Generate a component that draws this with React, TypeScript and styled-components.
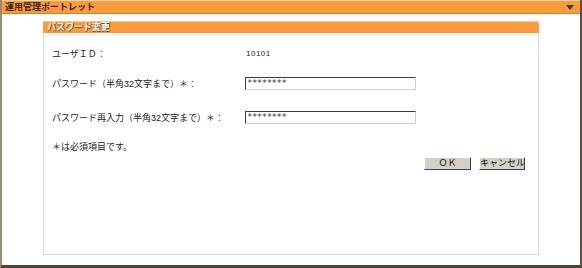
import React from 'react';
import styled, { createGlobalStyle } from 'styled-components';

const GlobalStyle = createGlobalStyle`
  html, body {
    margin: 0;
    padding: 0;
    background: #ffffff;
  }
  body {
    font-family: "Liberation Sans", "Noto Sans CJK JP", sans-serif;
  }
`;

const orange = '#ff9a3c';

const Portlet = styled.div`
  width: 582px;
  height: 268px;
  box-sizing: border-box;
  display: flex;
  flex-direction: column;
  background: #ffffff;
  border-left: 2px solid #9a8a70;
  border-right: 2px solid #5a5040;
  border-bottom: 3px solid #4e4538;
`;

const PortletHeader = styled.div`
  height: 12px;
  display: flex;
  align-items: center;
  justify-content: space-between;
  background: ${orange};
  border-top: 1px solid #ffd8a8;
  border-bottom: 1px solid #e07f22;
  padding: 0 4px 0 3px;

  .title {
    font-size: 9px;
    font-weight: bold;
    color: #3a2410;
    line-height: 12px;
  }
`;

const MenuArrow = styled.span`
  width: 0;
  height: 0;
  border-left: 4px solid transparent;
  border-right: 4px solid transparent;
  border-top: 5px solid #3c3c3c;
  margin-right: 2px;
`;

const PortletBody = styled.div`
  flex: 1;
  padding: 7px 41px 10px 41px;
  display: flex;
`;

const Panel = styled.div`
  flex: 1;
  display: flex;
  flex-direction: column;
  border: 1px solid #dadada;
  border-top: none;
`;

const PanelHeader = styled.div`
  height: 11px;
  margin: 0 -1px;
  background: ${orange};
  border-top: 1px solid #ffc890;
  border-top-right-radius: 3px;
  padding-left: 4px;
  font-size: 9px;
  font-weight: bold;
  line-height: 11px;
  color: #ffffff;
  text-shadow: 1px 0 0 #7a4a18, 0 1px 0 #7a4a18;
`;

const Form = styled.div`
  display: flex;
  flex-direction: column;
  padding: 0 13px 0 8px;
`;

const Row = styled.div<{ $top: number }>`
  display: grid;
  grid-template-columns: 193px 171px;
  align-items: center;
  height: 14px;
  margin-top: ${(p) => p.$top}px;
  font-size: 9px;
  color: #222222;
`;

const Value = styled.span`
  padding-left: 1px;
  font-size: 8px;
  letter-spacing: 0.5px;
`;

const MaskedBox = styled.input`
  box-sizing: border-box;
  width: 171px;
  height: 13px;
  padding: 0 1px;
  margin: 0;
  font-size: 9px;
  letter-spacing: -0.5px;
  font-family: "DejaVu Sans Mono", monospace;
  color: #333333;
  background: #ffffff;
  border-top: 1px solid #3a3a3a;
  border-left: 1px solid #3a3a3a;
  border-right: 1px solid #d4d0c8;
  border-bottom: 1px solid #d4d0c8;
  outline: none;
`;

const Note = styled.div`
  margin-top: 16px;
  height: 14px;
  line-height: 14px;
  font-size: 9px;
  color: #222222;
`;

const Buttons = styled.div`
  display: flex;
  justify-content: flex-end;
  gap: 8px;
  margin-top: 3px;
`;

const Button = styled.button<{ $width: number }>`
  box-sizing: border-box;
  width: ${(p) => p.$width}px;
  height: 13px;
  padding: 0;
  margin: 0;
  white-space: nowrap;
  overflow: hidden;
  font-size: 9px;
  font-family: "Liberation Sans", "Noto Sans CJK JP", sans-serif;
  line-height: 11px;
  color: #111111;
  background: #d4d0c8;
  border-top: 1px solid #ffffff;
  border-left: 1px solid #ffffff;
  border-right: 1px solid #404040;
  border-bottom: 1px solid #404040;
`;

const App: React.FC = () => {
  return (
    <>
      <GlobalStyle />
      <Portlet>
        <PortletHeader>
          <span className="title">運用管理ポートレット</span>
          <MenuArrow />
        </PortletHeader>
        <PortletBody>
          <Panel>
            <PanelHeader>パスワード変更</PanelHeader>
            <Form>
              <Row $top={13}>
                <span>ユーザＩＤ：</span>
                <Value>10101</Value>
              </Row>
              <Row $top={16}>
                <span>パスワード（半角32文字まで）＊：</span>
                <MaskedBox type="text" readOnly value="********" />
              </Row>
              <Row $top={20}>
                <span>パスワード再入力（半角32文字まで）＊：</span>
                <MaskedBox type="text" readOnly value="********" />
              </Row>
              <Note>＊は必須項目です。</Note>
              <Buttons>
                <Button $width={47}>ＯＫ</Button>
                <Button $width={46}>キャンセル</Button>
              </Buttons>
            </Form>
          </Panel>
        </PortletBody>
      </Portlet>
    </>
  );
};

export default App;
